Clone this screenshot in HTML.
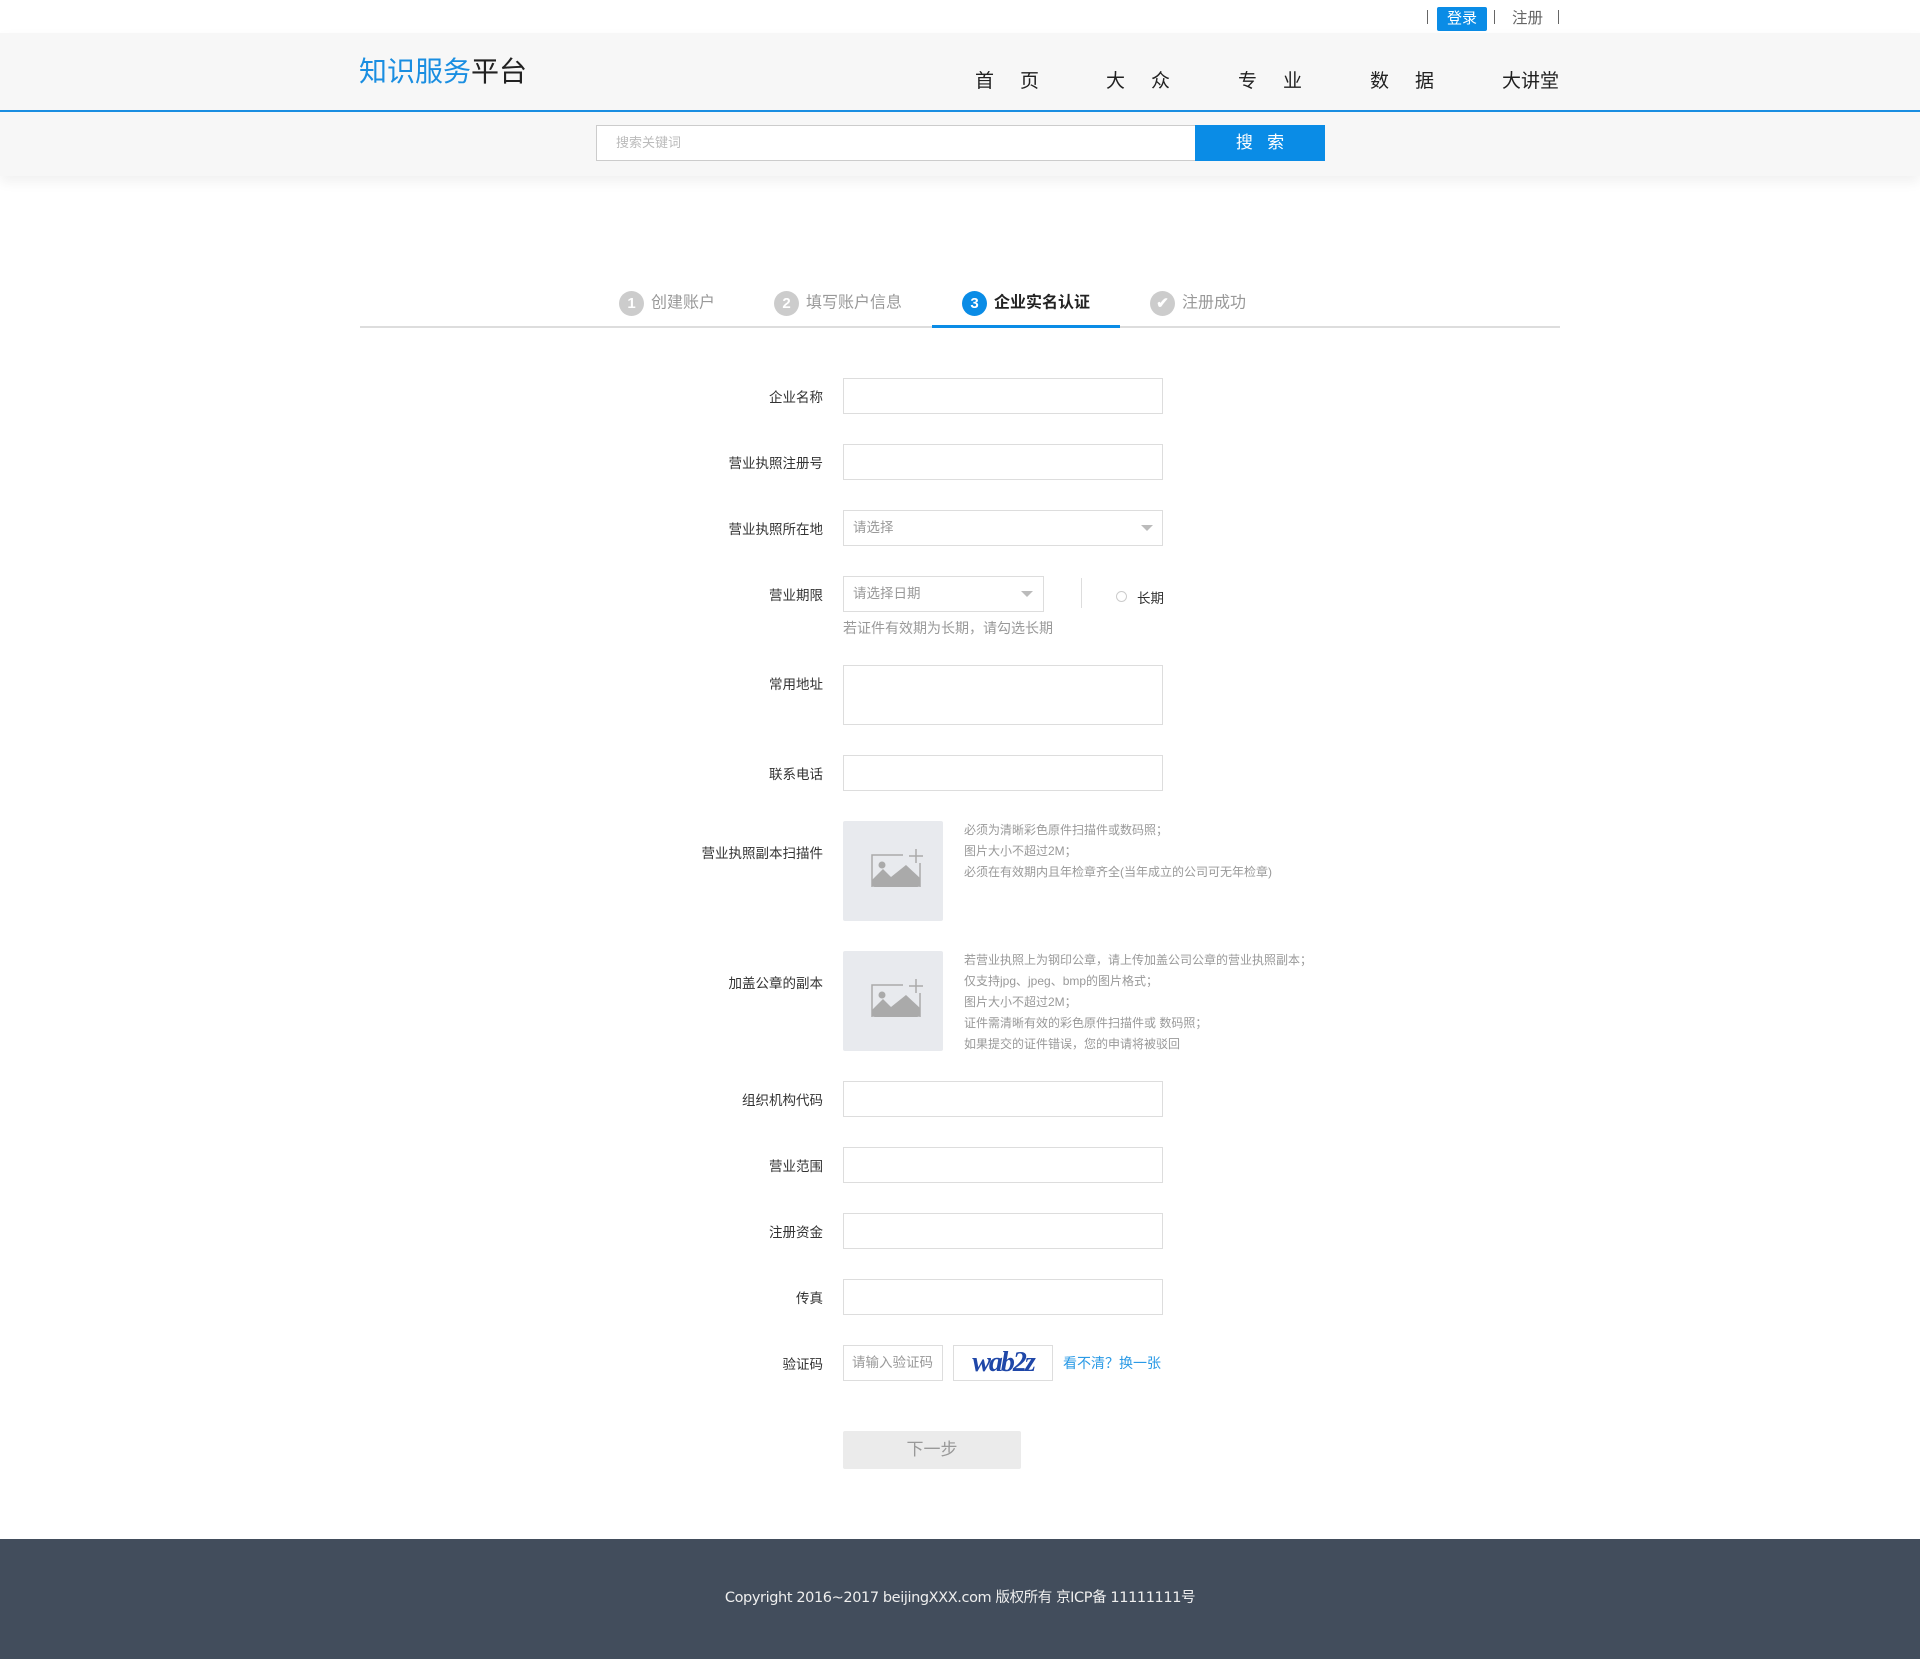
<!DOCTYPE html>
<html><head><meta charset="utf-8"><style>
*{margin:0;padding:0;box-sizing:border-box}
body{width:1920px;height:1659px;position:relative;background:#fff;font-family:"Liberation Sans","Noto Sans CJK SC",sans-serif;overflow:hidden}
.a{position:absolute}
.lbl{position:absolute;right:1097px;font-size:13.5px;color:#333;text-align:right;white-space:nowrap}
.inp{position:absolute;left:843px;width:320px;height:36px;border:1px solid #ddd;background:#fff}
.ph{font-size:13.5px;color:#999;padding-left:9px;line-height:34px}
.tip{position:absolute;left:964px;font-size:12px;color:#999;line-height:21px;white-space:nowrap}
.up{position:absolute;left:843px;width:100px;height:100px;background:#e8eaee;border-radius:2px}
.caret{position:absolute;width:0;height:0;border-left:6px solid transparent;border-right:6px solid transparent;border-top:6px solid #bbb}
.step{position:absolute;top:291px;font-size:16px;color:#999;line-height:24px;white-space:nowrap}
.c{display:inline-block;width:25px;height:25px;border-radius:50%;background:#ccc;color:#fff;text-align:center;line-height:25px;font-size:15px;font-weight:bold;margin-right:7px;vertical-align:middle}
.nav{position:absolute;top:66px;font-size:19px;color:#222;white-space:nowrap}
.nav i{display:inline-block;width:26px}
</style></head><body>
<div class="a" style="left:1427px;top:10px;width:1px;height:14px;background:#666"></div>
<div class="a" style="left:1437px;top:7px;width:50px;height:24px;background:#0a8ce6;border-radius:2px;color:#fff;font-size:15px;text-align:center;line-height:24px">登录</div>
<div class="a" style="left:1494px;top:10px;width:1px;height:14px;background:#666"></div>
<div class="a" style="left:1512px;top:7px;font-size:15.5px;color:#666;line-height:24px">注册</div>
<div class="a" style="left:1558px;top:10px;width:1px;height:14px;background:#666"></div>
<div class="a" style="left:0;top:33px;width:1920px;height:143px;background:#f7f7f7;box-shadow:0 6px 12px rgba(0,0,0,0.06)"></div>
<div class="a" style="left:0;top:110px;width:1920px;height:2px;background:#1a8ee1"></div>
<div class="a" style="left:359px;top:54px;font-size:28px;line-height:36px;white-space:nowrap"><span style="color:#1a8ee1">知识服务</span><span style="color:#222">平台</span></div>
<div class="nav" style="left:975px">首<i></i>页</div>
<div class="nav" style="left:1106px">大<i></i>众</div>
<div class="nav" style="left:1238px">专<i></i>业</div>
<div class="nav" style="left:1370px">数<i></i>据</div>
<div class="nav" style="left:1502px">大讲堂</div>
<div class="a" style="left:596px;top:125px;width:600px;height:36px;background:#fff;border:1px solid #ccc"><span style="font-size:13px;color:#bbb;line-height:34px;padding-left:19px">搜索关键词</span></div>
<div class="a" style="left:1195px;top:125px;width:130px;height:36px;background:#0a8ce6;color:#fff;font-size:17px;text-align:center;line-height:36px">搜&nbsp;&nbsp;&nbsp;索</div>
<div class="a" style="left:360px;top:326px;width:1200px;height:2px;background:#ddd"></div>
<div class="a" style="left:932px;top:325px;width:188px;height:3px;background:#0a8ce6"></div>
<div class="step" style="left:619px"><span class="c">1</span>创建账户</div>
<div class="step" style="left:774px"><span class="c">2</span>填写账户信息</div>
<div class="step" style="left:962px;color:#222;font-weight:bold"><span class="c" style="background:#0a8ce6">3</span>企业实名认证</div>
<div class="step" style="left:1150px"><span class="c">&#10004;</span>注册成功</div>
<div class="lbl" style="top:386px">企业名称</div><div class="inp" style="top:378px"></div>
<div class="lbl" style="top:452px">营业执照注册号</div><div class="inp" style="top:444px"></div>
<div class="lbl" style="top:518px">营业执照所在地</div><div class="inp ph" style="top:510px">请选择</div>
<div class="caret" style="left:1141px;top:525px"></div>
<div class="lbl" style="top:584px">营业期限</div><div class="inp ph" style="top:576px;width:201px">请选择日期</div>
<div class="caret" style="left:1021px;top:591px"></div>
<div class="a" style="left:1081px;top:578px;width:1px;height:30px;background:#ddd"></div>
<div class="a" style="left:1116px;top:591px;width:11px;height:11px;border:1px solid #ccc;border-radius:50%"></div>
<div class="a" style="left:1137px;top:587px;font-size:13.5px;color:#333">长期</div>
<div class="a" style="left:843px;top:618px;font-size:14px;color:#999">若证件有效期为长期，请勾选长期</div>
<div class="lbl" style="top:673px">常用地址</div><div class="inp" style="top:665px;height:60px"></div>
<div class="lbl" style="top:763px">联系电话</div><div class="inp" style="top:755px"></div>
<div class="lbl" style="top:842px">营业执照副本扫描件</div>
<div class="up" style="top:821px"><svg width="100" height="100" viewBox="0 0 100 100"><path d="M29 66 V34 H60 M77 42 V66" stroke="#aaa" stroke-width="1.5" fill="none"/><path d="M29 59 L40 48 L48 56 L63 44 L77 57 V63 Q77 66 74 66 H32 Q29 66 29 63Z" fill="#aaa"/><circle cx="39" cy="44" r="3.5" fill="#aaa"/><path d="M73 28 V42 M66 35 H80" stroke="#aaa" stroke-width="1.5"/></svg></div>
<div class="tip" style="top:820px">必须为清晰彩色原件扫描件或数码照；<br>图片大小不超过2M；<br>必须在有效期内且年检章齐全(当年成立的公司可无年检章)</div>
<div class="lbl" style="top:972px">加盖公章的副本</div>
<div class="up" style="top:951px"><svg width="100" height="100" viewBox="0 0 100 100"><path d="M29 66 V34 H60 M77 42 V66" stroke="#aaa" stroke-width="1.5" fill="none"/><path d="M29 59 L40 48 L48 56 L63 44 L77 57 V63 Q77 66 74 66 H32 Q29 66 29 63Z" fill="#aaa"/><circle cx="39" cy="44" r="3.5" fill="#aaa"/><path d="M73 28 V42 M66 35 H80" stroke="#aaa" stroke-width="1.5"/></svg></div>
<div class="tip" style="top:950px">若营业执照上为钢印公章，请上传加盖公司公章的营业执照副本；<br>仅支持jpg、jpeg、bmp的图片格式；<br>图片大小不超过2M；<br>证件需清晰有效的彩色原件扫描件或 数码照；<br>如果提交的证件错误，您的申请将被驳回</div>
<div class="lbl" style="top:1089px">组织机构代码</div><div class="inp" style="top:1081px"></div>
<div class="lbl" style="top:1155px">营业范围</div><div class="inp" style="top:1147px"></div>
<div class="lbl" style="top:1221px">注册资金</div><div class="inp" style="top:1213px"></div>
<div class="lbl" style="top:1287px">传真</div><div class="inp" style="top:1279px"></div>
<div class="lbl" style="top:1353px">验证码</div>
<div class="inp ph" style="top:1345px;width:100px;padding-left:8px">请输入验证码</div>
<div class="a" style="left:953px;top:1345px;width:100px;height:36px;border:1px solid #ddd;text-align:center;font-family:'Liberation Serif',serif;font-style:italic;font-weight:bold;font-size:28px;color:#1f47a8;line-height:34px;letter-spacing:-2px">wab2z</div>
<div class="a" style="left:1063px;top:1353px;font-size:14px;color:#2a9ae6">看不清？换一张</div>
<div class="a" style="left:843px;top:1431px;width:178px;height:38px;background:#ebebeb;border-radius:2px;color:#999;font-size:17px;text-align:center;line-height:38px">下一步</div>
<div class="a" style="left:0;top:1539px;width:1920px;height:120px;background:#424d5c"></div>
<div class="a" style="left:0;top:1588px;width:1920px;text-align:center;color:#eee;font-size:14.5px;line-height:20px;font-family:'DejaVu Sans','Noto Sans CJK SC',sans-serif;letter-spacing:-0.4px">Copyright 2016~2017 beijingXXX.com 版权所有 京ICP备 11111111号</div>
</body></html>
